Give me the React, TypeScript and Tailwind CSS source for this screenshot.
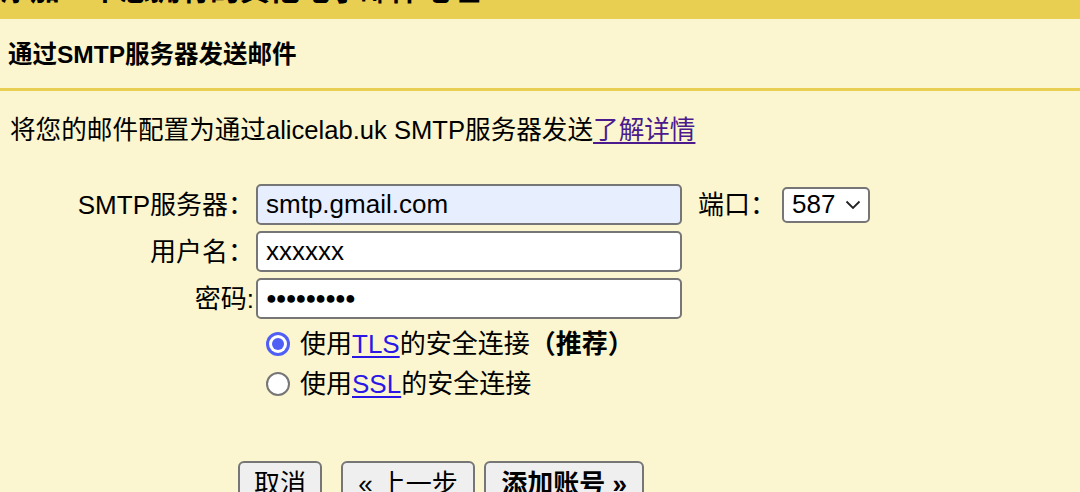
import React from "react";

function Radio({ checked }: { checked: boolean }) {
  return checked ? (
    <span className="w-[24px] h-[24px] rounded-full bg-[#4f5ff6] flex items-center justify-center shrink-0">
      <span className="w-[18px] h-[18px] rounded-full bg-white flex items-center justify-center">
        <span className="w-[12px] h-[12px] rounded-full bg-[#4f5ff6]" />
      </span>
    </span>
  ) : (
    <span className="w-[24px] h-[24px] rounded-full border-2 border-[#767676] bg-white shrink-0" />
  );
}

export default function App() {
  const font = {
    fontFamily: '"Liberation Sans", Arial, "Noto Sans CJK SC", sans-serif',
  };
  return (
    <div
      className="w-[1080px] h-[492px] overflow-hidden bg-[#fbf6cf] text-black"
      style={font}
    >
      {/* top title bar (mostly scrolled off) */}
      <div className="h-[19px] bg-[#e8cf52] overflow-hidden">
        <div className="text-[30px] leading-[30px] font-bold mt-[-25px] whitespace-nowrap">
          添加一个您拥有的其他电子邮件地址
        </div>
      </div>

      {/* section header */}
      <div className="h-[72px] flex items-center pl-[8px] pt-[3px] border-b-[3px] border-[#e8cf52]">
        <div className="text-[24.5px] font-bold leading-none">通过SMTP服务器发送邮件</div>
      </div>

      {/* description */}
      <div className="pt-[24px] pl-[10px] text-[25.6px] leading-[30px] whitespace-nowrap">
        将您的邮件配置为通过alicelab.uk SMTP服务器发送
        <a className="text-[#4b1a8c] underline underline-offset-[3px]" href="#">
          了解详情
        </a>
      </div>

      {/* form */}
      <div className="mt-[39px] flex flex-col gap-[6px]">
        <div className="flex items-center">
          <div className="w-[254px] text-right text-[26px] leading-none">SMTP服务器：</div>
          <div className="ml-[2px] w-[426px] h-[41px] border-2 border-[#767676] rounded-[5px] bg-[#e7eefd] flex items-center pl-[8px] text-[26px]">
            smtp.gmail.com
          </div>
          <div className="ml-[16px] w-[84px] text-[26px] leading-none">端口：</div>
          <div className="w-[88px] h-[36px] border-2 border-[#767676] rounded-[5px] bg-white flex items-center pl-[8px] text-[26px]">
            <span>587</span>
            <svg className="ml-[10px]" width="16" height="10" viewBox="0 0 16 10">
              <path d="M1.5 1.5 L8 8 L14.5 1.5" fill="none" stroke="#222" strokeWidth="1.8" />
            </svg>
          </div>
        </div>
        <div className="flex items-center">
          <div className="w-[254px] text-right text-[26px] leading-none">用户名：</div>
          <div className="ml-[2px] w-[426px] h-[41px] border-2 border-[#767676] rounded-[5px] bg-white flex items-center pl-[8px] text-[26px]">
            xxxxxx
          </div>
        </div>
        <div className="flex items-center">
          <div className="w-[254px] text-right text-[26px] leading-none">密码:</div>
          <div className="ml-[2px] w-[426px] h-[41px] border-2 border-[#767676] rounded-[5px] bg-white flex items-center pl-[8px] text-[18px] tracking-[-1px]">
            ●●●●●●●●●
          </div>
        </div>
      </div>

      {/* radios */}
      <div className="mt-[10px] pl-[266px] flex flex-col gap-[10px]">
        <div className="flex items-center h-[30px]">
          <Radio checked />
          <span className="ml-[10px] text-[26px] leading-none whitespace-nowrap">
            使用
            <a className="text-[#2a17e6] underline underline-offset-[3px]" href="#">TLS</a>
            的安全连接<span className="font-bold">（推荐）</span>
          </span>
        </div>
        <div className="flex items-center h-[30px]">
          <Radio checked={false} />
          <span className="ml-[10px] text-[26px] leading-none whitespace-nowrap">
            使用
            <a className="text-[#2a17e6] underline underline-offset-[3px]" href="#">SSL</a>
            的安全连接
          </span>
        </div>
      </div>

      {/* buttons */}
      <div className="mt-[62px] pl-[238px] flex">
        <button className="w-[84px] h-[46px] border-2 border-[#767676] rounded-[6px] bg-[#efefef] text-[26px] leading-none">
          取消
        </button>
        <button className="ml-[19px] w-[134px] h-[46px] border-2 border-[#767676] rounded-[6px] bg-[#efefef] text-[26px] leading-none">
          « 上一步
        </button>
        <button className="ml-[9px] w-[160px] h-[46px] border-2 border-[#767676] rounded-[6px] bg-[#efefef] text-[26px] leading-none font-bold">
          添加账号 »
        </button>
      </div>
    </div>
  );
}
